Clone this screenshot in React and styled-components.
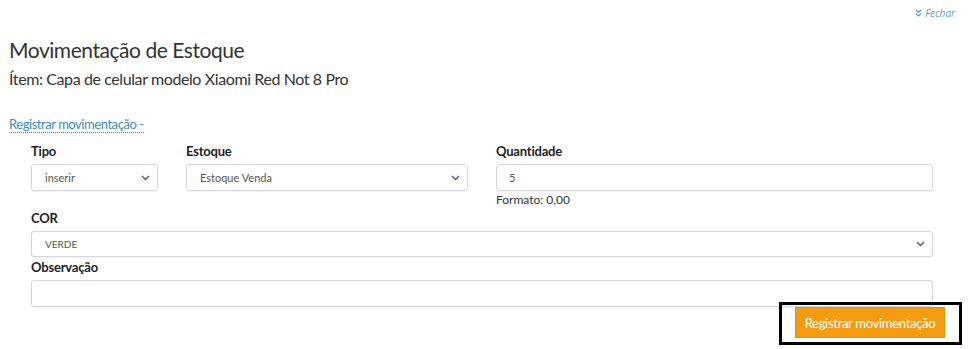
import styled, { createGlobalStyle } from "styled-components"

const Global = createGlobalStyle`
body {
  margin: 0;
  background: #fff;
  font-family: Lato, "Open Sans", sans-serif;
  color: #333;
}
`

//styles
const Page = styled.div`
padding: 0 0 0 9px;
`

const TopBar = styled.div`
display: flex;
justify-content: flex-end;
align-items: center;
height: 26px;
padding-right: 17px;
`

const CloseLink = styled.a`
display: flex;
align-items: center;
gap: 3px;
font-family: "Open Sans", sans-serif;
font-style: italic;
font-size: 10px;
color: #5b9bd5;
text-decoration: none;
`

const Title = styled.h1`
margin: 11px 0 0;
font-size: 21px;
line-height: 26px;
font-weight: 400;
letter-spacing: -0.45px;
color: #333;
`

const SubTitle = styled.h2`
margin: 5px 0 0;
font-size: 16px;
line-height: 22px;
font-weight: 400;
letter-spacing: -0.4px;
color: #333;
`

const LinkLine = styled.div`
display: flex;
margin-top: 26px;
`

const ToggleLink = styled.a`
font-size: 13px;
line-height: 16px;
letter-spacing: -0.45px;
color: #3c8dbc;
text-decoration: none;
border-bottom: 1px dotted #6a5fd8;
`

const Form = styled.form`
width: 930px;
margin-left: 8px;
margin-top: 9px;
`

const Row = styled.div`
display: grid;
grid-template-columns: ${p => p.$cols || "1fr"};
margin-top: ${p => p.$mt || 0}px;
`

const Field = styled.div`
padding: 0 14px;
`

const Label = styled.label`
display: block;
font-size: 13px;
line-height: 18px;
font-weight: 700;
letter-spacing: -0.2px;
color: #1e1e1e;
margin-bottom: 4px;
`

const SelectWrap = styled.div`
position: relative;
`

const Select = styled.select`
display: block;
appearance: none;
width: 100%;
height: ${p => p.$h || 27}px;
padding: 0 30px 0 13px;
border: 1px solid #d2d6de;
border-radius: 3px;
background: #fff;
font-family: inherit;
font-size: ${p => p.$fs || 11}px;
color: #555;
box-shadow: 0 1px 1px rgba(0,0,0,0.04);
`

const Chevron = styled.svg`
position: absolute;
right: 8px;
top: 50%;
transform: translateY(-50%);
pointer-events: none;
`

const Input = styled.input`
display: block;
box-sizing: border-box;
width: 100%;
height: ${p => p.$h || 27}px;
padding: 0 12px;
border: 1px solid #d2d6de;
border-radius: 3px;
font-family: inherit;
font-size: 11px;
color: #555;
box-shadow: 0 1px 1px rgba(0,0,0,0.04);
`

const Help = styled.div`
font-size: 12px;
line-height: 18px;
color: #333;
`

const Actions = styled.div`
display: flex;
justify-content: flex-end;
margin: -5px -15px 0 0;
`

const Highlight = styled.div`
display: flex;
padding: 2px 14px 4px 13px;
border: 3px solid #000;
`

const Button = styled.button`
display: block;
width: 150px;
height: 31px;
padding: 0;
white-space: nowrap;
background: #f39c12;
border: 1px solid #e08e0b;
color: #fff;
font-family: inherit;
font-size: 13px;
letter-spacing: -0.3px;
`

function Arrow(){
    return(
        <Chevron width="9" height="6" viewBox="0 0 9 6">
            <path d="M1 1l3.5 3.5L8 1" fill="none" stroke="#555" strokeWidth="1.3"/>
        </Chevron>
    )
}

function SelectBox({value, h, fs}){
    return(
        <SelectWrap>
            <Select $h={h} $fs={fs} defaultValue={value}>
                <option>{value}</option>
            </Select>
            <Arrow/>
        </SelectWrap>
    )
}

export default function App(){
    return(
        <>
        <Global/>
        <Page>
            <TopBar>
                <CloseLink href="#">
                    <svg width="7" height="8" viewBox="0 0 7 8">
                        <path d="M1 1l2.5 2.5L6 1M1 4.5l2.5 2.5L6 4.5" fill="none" stroke="#5b9bd5" strokeWidth="1.2"/>
                    </svg>
                    Fechar
                </CloseLink>
            </TopBar>
            <Title>Movimentação de Estoque</Title>
            <SubTitle>Ítem: Capa de celular modelo Xiaomi Red Not 8 Pro</SubTitle>
            <LinkLine>
                <ToggleLink href="#">Registrar movimentação -</ToggleLink>
            </LinkLine>

{/* form */}
            <Form>
                <Row $cols="2fr 4fr 6fr">
                    <Field>
                        <Label>Tipo</Label>
                        <SelectBox value="inserir"/>
                    </Field>
                    <Field>
                        <Label>Estoque</Label>
                        <SelectBox value="Estoque Venda"/>
                    </Field>
                    <Field>
                        <Label>Quantidade</Label>
                        <Input defaultValue="5"/>
                        <Help>Formato: 0,00</Help>
                    </Field>
                </Row>
                <Row>
                    <Field>
                        <Label>COR</Label>
                        <SelectBox value="VERDE" h={26} fs={10}/>
                    </Field>
                </Row>
                <Row $mt={1}>
                    <Field>
                        <Label>Observação</Label>
                        <Input $h={27}/>
                    </Field>
                </Row>
                <Actions>
                    <Highlight>
                        <Button type="button">Registrar movimentação</Button>
                    </Highlight>
                </Actions>
            </Form>
        </Page>
        </>
    )
}
